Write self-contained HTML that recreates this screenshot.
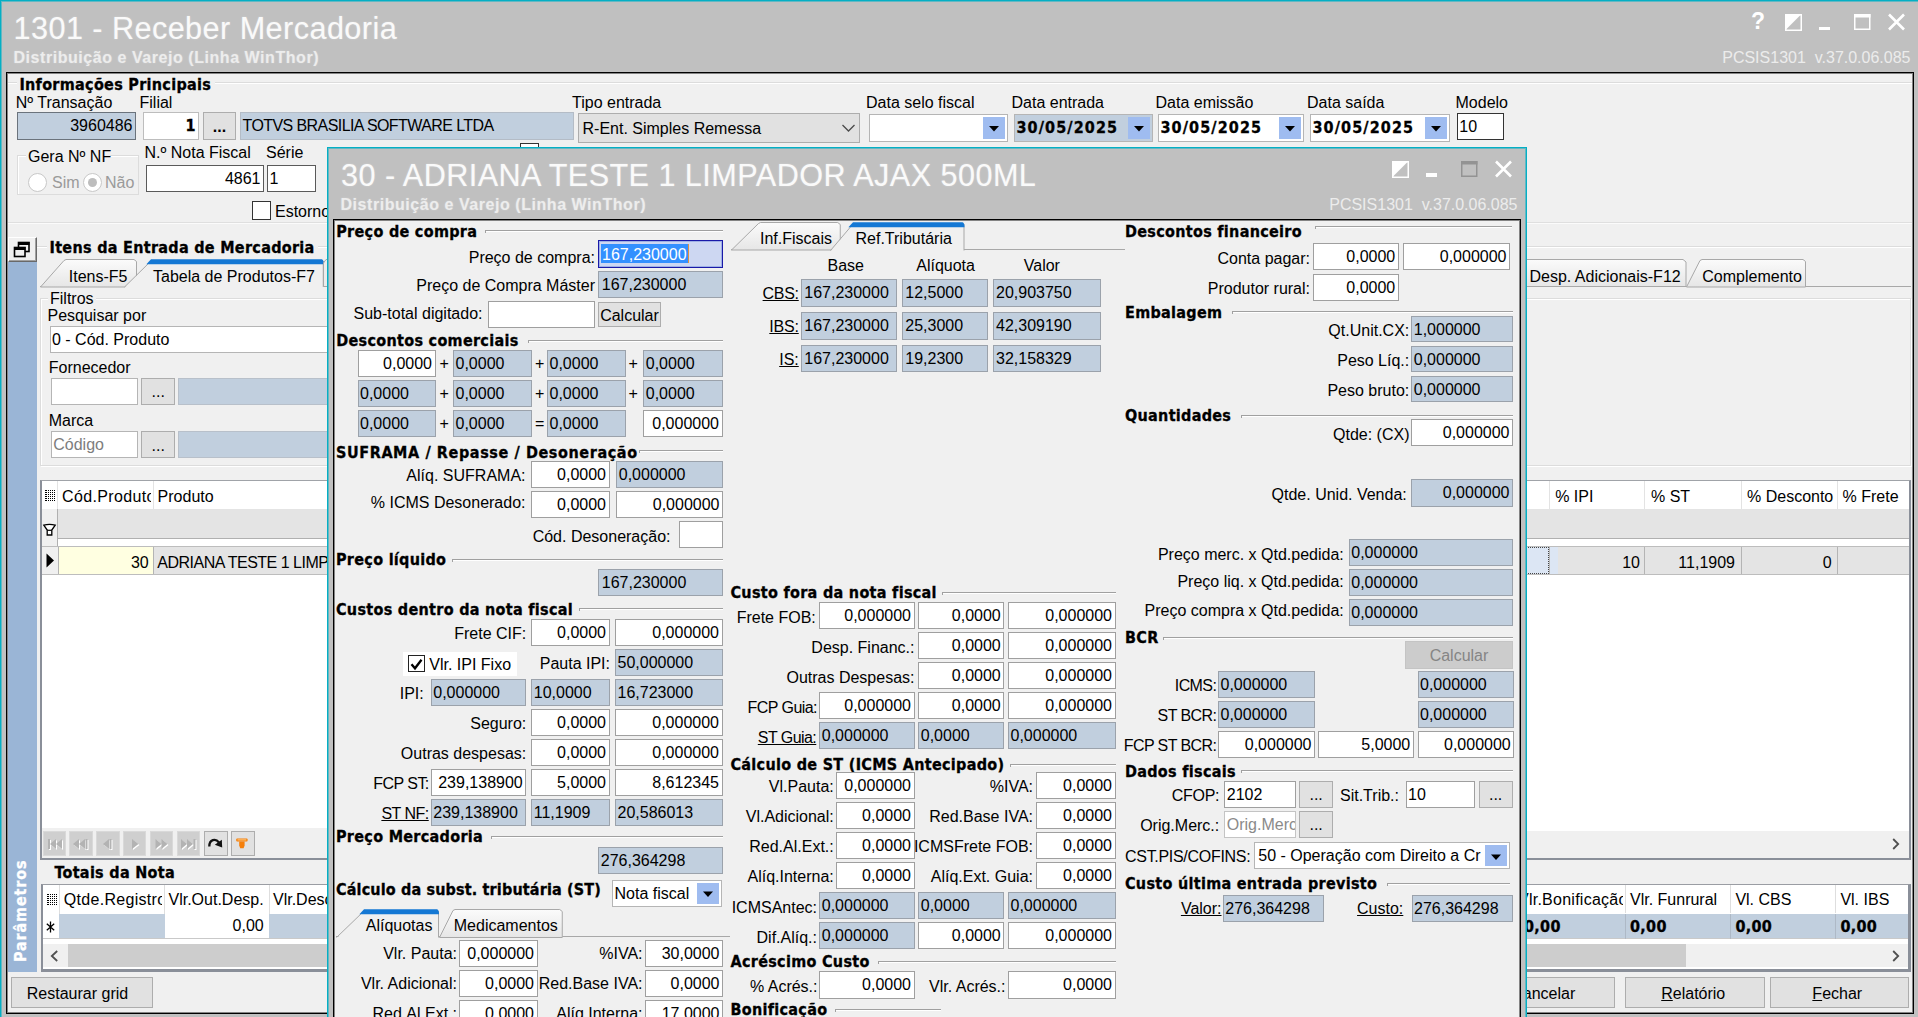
<!DOCTYPE html>
<html lang="pt-BR"><head><meta charset="utf-8"><title>1301 - Receber Mercadoria</title><style>
html,body{margin:0;padding:0}
body{width:1918px;height:1017px;position:relative;overflow:hidden;background:#c0c0c0;font:16px/20px "Liberation Sans", sans-serif;color:#000}
.a{position:absolute;box-sizing:content-box}
.t{white-space:pre;line-height:20px;font-size:16px}
.b{font-family:"DejaVu Sans Condensed", "Liberation Sans", sans-serif;font-weight:bold;letter-spacing:.3px;-webkit-text-stroke:.3px #000}
.vt{-webkit-text-stroke:.3px #fff}
.bx{box-sizing:border-box;white-space:pre;overflow:hidden;font-size:16px}
.bx.b{letter-spacing:0}
.ttl{font:30.6px/36px "Liberation Sans", sans-serif;letter-spacing:.45px;color:#fafafa;white-space:pre;text-shadow:0 0 2px rgba(255,255,255,.35)}
.sub{font:bold 16px/20px "Liberation Sans", sans-serif;letter-spacing:.55px;color:#ededed;white-space:pre;text-shadow:0 0 2px rgba(255,255,255,.3)}
.ver{font:16px/20px "Liberation Sans", sans-serif;color:#ececec;white-space:pre}
svg{overflow:visible}
.q{font:bold 23px/26px "Liberation Sans", sans-serif;color:#fff}
.vt{transform-origin:0 0;transform:rotate(-90deg);font-size:16px;color:#fff;white-space:nowrap;line-height:20px;letter-spacing:.85px}
</style></head><body>
<div class="a" style="left:0px;top:-0.25px;width:1918px;height:1px;background:#04afc4;"></div>
<div class="a" style="left:0px;top:0.75px;width:1918px;height:1px;background:#62b8c3;"></div>
<div class="a" style="left:0px;top:-0.25px;width:1px;height:1017px;background:#04afc4;"></div>
<div class="a" style="left:1px;top:0.75px;width:1px;height:1016px;background:#62b8c3;"></div>
<div class="a ttl" style="left:13.5px;top:10px">1301 - Receber Mercadoria</div>
<div class="a sub" style="left:13.5px;top:47.5px">Distribuição e Varejo (Linha WinThor)</div>
<div class="a ver" style="right:7.5px;top:48px">PCSIS1301  v.37.0.06.085</div>
<div class="a q" style="left:1751px;top:8.25px">?</div>
<svg class="a" style="left:1784.75px;top:13.75px" width="17" height="17"><rect x="0.75" y="0.75" width="15.5" height="15.5" fill="none" stroke="#fff" stroke-width="1.5"/><polygon points="0,0 16.5,0 0,16.5" fill="#fff"/></svg>
<div class="a" style="left:1819px;top:26.5px;width:10.5px;height:3.5px;background:#fff;"></div>
<svg class="a" style="left:1853.5px;top:14.25px" width="17" height="16"><rect x="0.75" y="0.75" width="15" height="14.5" fill="none" stroke="#fff" stroke-width="1.5"/><rect x="0" y="0" width="16.5" height="3.5" fill="#fff"/></svg>
<svg class="a" style="left:1888px;top:14.25px" width="17" height="16"><path d="M1,0.5 L16,15.5 M16,0.5 L1,15.5" stroke="#fff" stroke-width="2.6" fill="none"/></svg>
<div class="a" style="left:6px;top:71.75px;width:1908px;height:942px;background:#f0f0f0;border:1px solid #000;box-sizing:border-box;box-shadow:inset 0 0 0 1px rgba(0,0,0,.45);"></div>
<div class="a" style="left:8px;top:81.75px;width:1904px;height:1px;background:#dcdcdc;"></div>
<div class="a" style="left:8px;top:82.75px;width:1904px;height:1px;background:#fff;"></div>
<div class="a" style="left:17px;top:75.75px;width:198px;height:12px;background:#f0f0f0;"></div>
<div class="a t b" style="top:74.55px;left:19.4px;">Informações Principais</div>
<div class="a t" style="top:92.65px;left:15.75px;">Nº Transação</div>
<div class="a t" style="top:92.65px;left:139.5px;">Filial</div>
<div class="a t" style="top:92.65px;left:572px;">Tipo entrada</div>
<div class="a t" style="top:92.65px;left:866px;">Data selo fiscal</div>
<div class="a t" style="top:92.65px;left:1011.5px;">Data entrada</div>
<div class="a t" style="top:92.65px;left:1155.5px;">Data emissão</div>
<div class="a t" style="top:92.65px;left:1307px;">Data saída</div>
<div class="a t" style="top:92.65px;left:1455.5px;">Modelo</div>
<div class="a bx" style="left:16.5px;top:112.25px;width:119.5px;height:28px;background:#c1cfde;border:1px solid #6b737c;line-height:26.5px;text-align:right;padding:0 2.5px;">3960486</div>
<div class="a bx b" style="left:143px;top:112.25px;width:56px;height:28px;background:#fff;border:1px solid #bdbdbd;line-height:26.5px;text-align:right;padding:0 2.5px;">1</div>
<div class="a bx" style="left:203px;top:112.25px;width:33px;height:28px;background:#e1e1e1;border:1px solid #adadad;line-height:27.5px;text-align:center;font-weight:bold;">...</div>
<div class="a bx" style="left:240px;top:112.25px;width:334px;height:28px;background:#c1cfde;border:1px solid #b4bcc6;line-height:26.5px;text-align:left;padding:0 1.5px;letter-spacing:-0.58px;">TOTVS BRASILIA SOFTWARE LTDA</div>
<div class="a bx" style="left:578px;top:112.75px;width:282px;height:30.5px;background:#e1e1e1;border:1px solid #adadad;line-height:29.0px;text-align:left;padding:0 3.5px;">R-Ent. Simples Remessa</div>
<svg class="a" style="left:840px;top:123px" width="18" height="12"><path d="M2.5,2 L8.5,8 L14.5,2" stroke="#4a4a4a" stroke-width="1.3" fill="none"/></svg>
<div class="a bx" style="left:869px;top:113.75px;width:138.5px;height:28px;background:#fff;border:1px solid #b5b5b5;line-height:26.5px;text-align:left;padding:0 1.5px;"></div>
<div class="a" style="left:982.5px;top:116.75px;width:22px;height:22px;background:#9fbcf0;"></div>
<svg class="a" style="left:982.5px;top:117px" width="22" height="22"><polygon points="6.0,9.0 16.0,9.0 11.0,14.5" fill="#000"/></svg>
<div class="a bx b" style="left:1014px;top:113.75px;width:138.5px;height:28px;background:#c1cfde;border:1px solid #b5b5b5;line-height:26.5px;text-align:left;padding:0 1.5px;letter-spacing:1.1px;">30/05/2025</div>
<div class="a" style="left:1127.5px;top:116.75px;width:22px;height:22px;background:#9fbcf0;"></div>
<svg class="a" style="left:1127.5px;top:117px" width="22" height="22"><polygon points="6.0,9.0 16.0,9.0 11.0,14.5" fill="#000"/></svg>
<div class="a bx b" style="left:1158px;top:113.75px;width:146px;height:28px;background:#fff;border:1px solid #b5b5b5;line-height:26.5px;text-align:left;padding:0 1.5px;letter-spacing:1.1px;">30/05/2025</div>
<div class="a" style="left:1279px;top:116.75px;width:22px;height:22px;background:#9fbcf0;"></div>
<svg class="a" style="left:1279px;top:117px" width="22" height="22"><polygon points="6.0,9.0 16.0,9.0 11.0,14.5" fill="#000"/></svg>
<div class="a bx b" style="left:1310px;top:113.75px;width:140px;height:28px;background:#fff;border:1px solid #b5b5b5;line-height:26.5px;text-align:left;padding:0 1.5px;letter-spacing:1.1px;">30/05/2025</div>
<div class="a" style="left:1425px;top:116.75px;width:22px;height:22px;background:#9fbcf0;"></div>
<svg class="a" style="left:1425px;top:117px" width="22" height="22"><polygon points="6.0,9.0 16.0,9.0 11.0,14.5" fill="#000"/></svg>
<div class="a bx" style="left:1456.75px;top:112.75px;width:47.5px;height:27.5px;background:#fff;border:1px solid #333;line-height:26.0px;text-align:left;padding:0 1.5px;">10</div>
<div class="a" style="left:17px;top:154.75px;width:121.5px;height:40px;border:1px solid #dcdcdc;box-sizing:border-box;box-shadow:inset 1px 1px 0 #fff;"></div>
<div class="a" style="left:26px;top:149.75px;width:84px;height:12px;background:#f0f0f0;"></div>
<div class="a t" style="top:146.65px;left:28px;">Gera Nº NF</div>
<div class="a" style="left:28px;top:173px;width:19px;height:19px;border-radius:50%;border:1px solid #c8c8c8;background:#fff;box-sizing:border-box"></div>
<div class="a t" style="top:173.45px;left:52px;color:#9a9a9a;">Sim</div>
<div class="a" style="left:82.5px;top:173px;width:19px;height:19px;border-radius:50%;border:1px solid #c8c8c8;background:#fff;box-sizing:border-box"></div>
<div class="a" style="left:87.5px;top:178px;width:9px;height:9px;border-radius:50%;background:#bdbdbd"></div>
<div class="a t" style="top:173.45px;left:105px;color:#9a9a9a;">Não</div>
<div class="a t" style="top:143.15px;left:144.5px;">N.º Nota Fiscal</div>
<div class="a t" style="top:143.15px;left:266px;">Série</div>
<div class="a bx" style="left:146px;top:165.25px;width:118px;height:27px;background:#fff;border:1px solid #5a5a5a;line-height:25.5px;text-align:right;padding:0 2.5px;">4861</div>
<div class="a bx" style="left:267px;top:165.25px;width:49px;height:27px;background:#fff;border:1px solid #5a5a5a;line-height:25.5px;text-align:left;padding:0 1.5px;">1</div>
<div class="a" style="left:252px;top:201.25px;width:18.5px;height:18.5px;background:#fff;border:1px solid #333;box-sizing:border-box;"></div>
<div class="a t" style="top:202.15px;left:275px;">Estorno</div>
<div class="a" style="left:520px;top:142.75px;width:18.5px;height:18.5px;background:#fff;border:1px solid #333;box-sizing:border-box;"></div>
<div class="a" style="left:8px;top:221.75px;width:1904px;height:1px;background:#dfdfdf;"></div>
<div class="a" style="left:8px;top:222.75px;width:1904px;height:1px;background:#fbfbfb;"></div>
<div class="a" style="left:37px;top:245.75px;width:1874px;height:1px;background:#dcdcdc;"></div>
<div class="a" style="left:37px;top:246.75px;width:1874px;height:1px;background:#fff;"></div>
<div class="a" style="left:47px;top:239.75px;width:271px;height:14px;background:#f0f0f0;"></div>
<div class="a t b" style="top:238.45px;left:49.5px;">Itens da Entrada de Mercadoria</div>
<div class="a" style="left:8px;top:236.75px;width:29px;height:25.5px;background:#f0f0f0;border:1px solid #fff;box-sizing:border-box;border-right-color:#696969;border-bottom-color:#696969;box-shadow:inset -1px -1px 0 #a0a0a0;"></div>
<svg class="a" style="left:13px;top:241px" width="18" height="17"><rect x="5.5" y="1.5" width="10.5" height="9" fill="none" stroke="#000" stroke-width="1.6"/><rect x="5" y="1" width="11.5" height="3" fill="#000"/><rect x="1.5" y="6.5" width="10.5" height="9" fill="#f0f0f0" stroke="#000" stroke-width="1.6"/><rect x="1" y="6" width="11.5" height="3" fill="#000"/></svg>
<div class="a" style="left:8px;top:262.25px;width:29px;height:710px;background:#9ab5d6;"></div>
<div class="a b vt" style="left:11px;top:962px">Parâmetros</div>
<div class="a" style="left:40px;top:285.75px;width:1871px;height:1px;background:#a8a8a8;"></div>
<svg class="a" style="left:40px;top:258.5px" width="99" height="28.5"><defs><linearGradient id="g40" x1="0" y1="0" x2="0" y2="1"><stop offset="0" stop-color="#fbfbfb"/><stop offset="1" stop-color="#e6e6e6"/></linearGradient></defs><polygon points="0.5,28.0 24,1.5 26,0.5 94,0.5 96.5,2.5 96.5,28.0" fill="url(#g40)" stroke="#a8a8a8" stroke-width="1"/></svg>
<div class="a t" style="top:267.15px;left:68.75px;">Itens-F5</div>
<svg class="a" style="left:123.75px;top:259px" width="200.75" height="29"><polygon points="0.5,29 27,2 199.25,2 199.25,29" fill="#f0f0f0"/><path d="M0.5,28 L27,2 M199.25,2 L199.25,28" stroke="#a8a8a8" fill="none"/><path d="M22.4,5.2 L27,0.3 L197.75,0.3 Q199.75,0.6 199.75,5.2 Z" fill="#1478d4"/></svg>
<div class="a t" style="top:267.15px;left:153px;">Tabela de Produtos-F7</div>
<svg class="a" style="left:323px;top:258.5px" width="60" height="28"><polygon points="0.5,27.5 0.5,4 3,0.5 59,0.5 59,27.5" fill="#ececec" stroke="#a8a8a8"/></svg>
<svg class="a" style="left:1480px;top:258.5px" width="208" height="28"><defs><linearGradient id="gr1" x1="0" y1="0" x2="0" y2="1"><stop offset="0" stop-color="#fbfbfb"/><stop offset="1" stop-color="#e6e6e6"/></linearGradient></defs><polygon points="0.5,27.5 20,0.5 203,0.5 206,3 206,27.5" fill="url(#gr1)" stroke="#a8a8a8"/></svg>
<div class="a t" style="top:266.95px;left:1529.5px;">Desp. Adicionais-F12</div>
<svg class="a" style="left:1686px;top:258.5px" width="122" height="28.5"><defs><linearGradient id="g1686" x1="0" y1="0" x2="0" y2="1"><stop offset="0" stop-color="#fbfbfb"/><stop offset="1" stop-color="#e6e6e6"/></linearGradient></defs><polygon points="0.5,28.0 14,1.5 16,0.5 117,0.5 119.5,2.5 119.5,28.0" fill="url(#g1686)" stroke="#a8a8a8" stroke-width="1"/></svg>
<div class="a t" style="top:266.95px;left:1702.3px;">Complemento</div>
<div class="a" style="left:40px;top:297.75px;width:1871px;height:168px;border:1px solid #dcdcdc;box-sizing:border-box;box-shadow:inset 1px 1px 0 #fff, 1px 1px 0 #fff;"></div>
<div class="a" style="left:48px;top:291.75px;width:48px;height:13px;background:#f0f0f0;"></div>
<div class="a t" style="top:288.85px;left:50px;">Filtros</div>
<div class="a t" style="top:306.45px;left:47.5px;">Pesquisar por</div>
<div class="a bx" style="left:49.5px;top:325.75px;width:400px;height:27.5px;background:#fff;border:1px solid #b5b5b5;line-height:26.0px;text-align:left;padding:0 1.5px;">0 - Cód. Produto</div>
<div class="a t" style="top:357.65px;left:48.75px;">Fornecedor</div>
<div class="a bx" style="left:50.75px;top:378.25px;width:87px;height:27px;background:#fff;border:1px solid #b5b5b5;line-height:25.5px;text-align:left;padding:0 1.5px;"></div>
<div class="a bx" style="left:141.25px;top:378.25px;width:34px;height:27px;background:#e1e1e1;border:1px solid #adadad;line-height:26.5px;text-align:center;">...</div>
<div class="a bx" style="left:178.25px;top:378.25px;width:300px;height:27px;background:#c1cfde;border:1px solid #b8c0ca;line-height:25.5px;text-align:left;padding:0 1.5px;"></div>
<div class="a t" style="top:410.65px;left:48.75px;">Marca</div>
<div class="a bx" style="left:50.75px;top:430.75px;width:87px;height:27.5px;background:#fff;border:1px solid #b5b5b5;line-height:26.0px;text-align:left;padding:0 1.5px;color:#7d7d7d;">Código</div>
<div class="a bx" style="left:141.25px;top:430.75px;width:34px;height:27.5px;background:#e1e1e1;border:1px solid #adadad;line-height:27.0px;text-align:center;">...</div>
<div class="a bx" style="left:178.25px;top:430.75px;width:300px;height:27.5px;background:#c1cfde;border:1px solid #b8c0ca;line-height:26.0px;text-align:left;padding:0 1.5px;"></div>
<div class="a" style="left:40px;top:479.75px;width:1871px;height:380px;background:#fff;border:2px solid #8a8f99;box-sizing:border-box;border-top:1px solid #a0a3a8;"></div>
<div class="a" style="left:57px;top:480.75px;width:1px;height:28px;background:#e3e3e3;"></div>
<div class="a" style="left:153px;top:480.75px;width:1px;height:28px;background:#e3e3e3;"></div>
<svg class="a" style="left:44px;top:489px" width="12" height="13"><g stroke="#000" stroke-width="1"><path d="M1,1.5h2M1,3.5h2M1,5.5h2M1,7.5h2M1,9.5h2M1,11.5h2" stroke-width="1.2"/><path d="M4,1.5h7M4,3.5h7M4,5.5h7M4,7.5h7M4,9.5h7M4,11.5h7" stroke-dasharray="1,1"/></g></svg>
<div class="a t" style="left:62px;top:486.54999999999995px;width:89px;overflow:hidden;letter-spacing:.35px">Cód.Produto</div>
<div class="a t" style="top:486.55px;left:157.6px;">Produto</div>
<div class="a" style="left:1549px;top:480.75px;width:1px;height:28px;background:#e3e3e3;"></div>
<div class="a" style="left:1644px;top:480.75px;width:1px;height:28px;background:#e3e3e3;"></div>
<div class="a" style="left:1740.5px;top:480.75px;width:1px;height:28px;background:#e3e3e3;"></div>
<div class="a" style="left:1836.5px;top:480.75px;width:1px;height:28px;background:#e3e3e3;"></div>
<div class="a t" style="top:486.55px;left:1555.2px;">% IPI</div>
<div class="a t" style="top:486.55px;left:1651px;">% ST</div>
<div class="a t" style="top:486.55px;left:1747px;">% Desconto</div>
<div class="a t" style="top:486.55px;left:1842.6px;">% Frete</div>
<div class="a" style="left:42px;top:509.25px;width:1867px;height:29px;background:#e4e4e4;"></div>
<div class="a" style="left:42px;top:509.25px;width:16px;height:37px;background:#f0f0f0;"></div>
<div class="a" style="left:57px;top:509.25px;width:1px;height:37px;background:#b0b0b0;"></div>
<div class="a" style="left:58px;top:537.75px;width:1851px;height:1px;background:#b0b0b0;"></div>
<svg class="a" style="left:43px;top:524px" width="13" height="12"><path d="M0.8,1.2 Q6.5,-0.3 12.2,1.2 L8.8,6 V11 H4.2 V6 Z" fill="#fff" stroke="#000" stroke-width="1.3"/><path d="M4.2,6.3H8.8" stroke="#000" stroke-width="1.2"/></svg>
<div class="a" style="left:42px;top:546.25px;width:1867px;height:28.5px;background:#e4e4e4;"></div>
<div class="a" style="left:42px;top:546.25px;width:16px;height:28.5px;background:#f0f0f0;"></div>
<div class="a" style="left:42px;top:545.75px;width:1867px;height:1px;background:#bdbdbd;"></div>
<div class="a" style="left:42px;top:574.25px;width:1867px;height:1px;background:#bdbdbd;"></div>
<svg class="a" style="left:46px;top:553px" width="9" height="15"><polygon points="0.5,0.5 8,7.5 0.5,14.5" fill="#000"/></svg>
<div class="a" style="left:58px;top:546.75px;width:95px;height:27.5px;background:#ffffe1;"></div>
<div class="a" style="left:57.5px;top:546.75px;width:1px;height:27.5px;background:#b4b4b4;"></div>
<div class="a" style="left:153px;top:546.75px;width:1px;height:27.5px;background:#b4b4b4;"></div>
<div class="a" style="left:1549px;top:546.75px;width:1px;height:27.5px;background:#b4b4b4;"></div>
<div class="a" style="left:1644px;top:546.75px;width:1px;height:27.5px;background:#b4b4b4;"></div>
<div class="a" style="left:1740.5px;top:546.75px;width:1px;height:27.5px;background:#b4b4b4;"></div>
<div class="a" style="left:1836.5px;top:546.75px;width:1px;height:27.5px;background:#b4b4b4;"></div>
<div class="a t" style="top:552.55px;right:1769.3px;">30</div>
<div class="a t" style="top:552.55px;left:157.3px;letter-spacing:-0.5px;">ADRIANA TESTE 1 LIMPADOR AJAX 500ML</div>
<div class="a" style="left:1500px;top:546.75px;width:49px;height:27.5px;background:#dce6f4;border:1px dotted #444;box-sizing:border-box;"></div>
<div class="a" style="left:1549.5px;top:546.75px;width:8px;height:27.5px;background:#dce6f4;"></div>
<div class="a t" style="top:552.55px;right:278px;">10</div>
<div class="a t" style="top:552.55px;right:183px;">11,1909</div>
<div class="a t" style="top:552.55px;right:86.3px;">0</div>
<div class="a" style="left:42px;top:827.75px;width:1867px;height:30px;background:#f0f0f0;"></div>
<div class="a" style="left:1527px;top:827.75px;width:382px;height:3px;background:#fff;"></div>
<div class="a" style="left:42.5px;top:831.25px;width:23.25px;height:24.25px;background:#cfcfcf;border:1px solid #d9d9d9;box-sizing:border-box"></div>
<svg class="a" style="left:42.5px;top:831.25px" width="24" height="25"><g fill="#fff" transform="translate(1,1)"><rect x="5" y="8" width="2" height="10"/><polygon points="13,8 7,13 13,18"/><polygon points="19,8 13,13 19,18"/></g><g fill="#b3b3b3"><rect x="5" y="8" width="2" height="10"/><polygon points="13,8 7,13 13,18"/><polygon points="19,8 13,13 19,18"/></g></svg>
<div class="a" style="left:69.25px;top:831.25px;width:23.25px;height:24.25px;background:#cfcfcf;border:1px solid #d9d9d9;box-sizing:border-box"></div>
<svg class="a" style="left:69.25px;top:831.25px" width="24" height="25"><g fill="#fff" transform="translate(1,1)"><polygon points="10,8 4,13 10,18"/><polygon points="16,8 10,13 16,18"/><rect x="16.5" y="8" width="2" height="10"/></g><g fill="#b3b3b3"><polygon points="10,8 4,13 10,18"/><polygon points="16,8 10,13 16,18"/><rect x="16.5" y="8" width="2" height="10"/></g></svg>
<div class="a" style="left:96.25px;top:831.25px;width:23.25px;height:24.25px;background:#cfcfcf;border:1px solid #d9d9d9;box-sizing:border-box"></div>
<svg class="a" style="left:96.25px;top:831.25px" width="24" height="25"><g fill="#fff" transform="translate(1,1)"><polygon points="13,8 7,13 13,18"/><rect x="13.5" y="8" width="2" height="10"/></g><g fill="#b3b3b3"><polygon points="13,8 7,13 13,18"/><rect x="13.5" y="8" width="2" height="10"/></g></svg>
<div class="a" style="left:123px;top:831.25px;width:23.25px;height:24.25px;background:#cfcfcf;border:1px solid #d9d9d9;box-sizing:border-box"></div>
<svg class="a" style="left:123px;top:831.25px" width="24" height="25"><g fill="#fff" transform="translate(1,1)"><polygon points="9,8 15.5,13 9,18"/></g><g fill="#b3b3b3"><polygon points="9,8 15.5,13 9,18"/></g></svg>
<div class="a" style="left:150px;top:831.25px;width:23.25px;height:24.25px;background:#cfcfcf;border:1px solid #d9d9d9;box-sizing:border-box"></div>
<svg class="a" style="left:150px;top:831.25px" width="24" height="25"><g fill="#fff" transform="translate(1,1)"><polygon points="5.5,8 11.5,13 5.5,18"/><polygon points="11.5,8 17.5,13 11.5,18"/></g><g fill="#b3b3b3"><polygon points="5.5,8 11.5,13 5.5,18"/><polygon points="11.5,8 17.5,13 11.5,18"/></g></svg>
<div class="a" style="left:176.75px;top:831.25px;width:23.25px;height:24.25px;background:#cfcfcf;border:1px solid #d9d9d9;box-sizing:border-box"></div>
<svg class="a" style="left:176.75px;top:831.25px" width="24" height="25"><g fill="#fff" transform="translate(1,1)"><polygon points="4,8 10,13 4,18"/><polygon points="10,8 16,13 10,18"/><rect x="16.5" y="8" width="2" height="10"/></g><g fill="#b3b3b3"><polygon points="4,8 10,13 4,18"/><polygon points="10,8 16,13 10,18"/><rect x="16.5" y="8" width="2" height="10"/></g></svg>
<div class="a" style="left:204.25px;top:831.25px;width:23.25px;height:24.25px;background:#e1e1e1;border:1px solid #adadad;box-sizing:border-box"></div>
<svg class="a" style="left:204.25px;top:831.25px" width="24" height="25"><path d="M5.3,15.5 C5.3,8.5 11.5,7 15,11.5" stroke="#111" stroke-width="2.3" fill="none"/><polygon points="10.8,13.8 18.2,16.6 17.8,8.8" fill="#111"/></svg>
<div class="a" style="left:231.25px;top:831.25px;width:23.25px;height:24.25px;background:#e1e1e1;border:1px solid #adadad;box-sizing:border-box"></div>
<svg class="a" style="left:231.25px;top:831.25px" width="24" height="25"><rect x="5.2" y="7.4" width="11.4" height="3.2" rx="1" fill="#f57f0a"/><rect x="6.5" y="8.4" width="8.8" height="1" fill="#ffd08a"/><path d="M8.2,10.4 H13.6 V14.6 L12.6,17.3 H9.2 L8.2,14.6 Z" fill="#f57f0a"/></svg>
<svg class="a" style="left:1892px;top:837.5px" width="8" height="12"><path d="M1.2,1 L6.2,6 L1.2,11" stroke="#505050" stroke-width="1.8" fill="none"/></svg>
<div class="a t b" style="top:863.45px;left:54.5px;">Totais da Nota</div>
<div class="a" style="left:41px;top:883.5px;width:1870px;height:88px;background:#fff;border:1px solid #9a9da3;box-sizing:border-box;border-bottom:3px solid #8a8f99;border-right:3px solid #8a8f99;border-left:2px solid #8a8f99;"></div>
<svg class="a" style="left:46px;top:893px" width="12" height="13"><g stroke="#000" stroke-width="1"><path d="M1,1.5h2M1,3.5h2M1,5.5h2M1,7.5h2M1,9.5h2M1,11.5h2" stroke-width="1.2"/><path d="M4,1.5h7M4,3.5h7M4,5.5h7M4,7.5h7M4,9.5h7M4,11.5h7" stroke-dasharray="1,1"/></g></svg>
<div class="a" style="left:59.25px;top:885.25px;width:1px;height:53px;background:#dedede;"></div>
<div class="a" style="left:164.25px;top:885.25px;width:1px;height:53px;background:#dedede;"></div>
<div class="a" style="left:268.75px;top:885.25px;width:1px;height:53px;background:#dedede;"></div>
<div class="a t" style="left:63.75px;top:890.15px;width:98px;overflow:hidden;letter-spacing:.3px">Qtde.Registro</div>
<div class="a t" style="top:890.15px;left:168.5px;">Vlr.Out.Desp.</div>
<div class="a t" style="top:890.15px;left:273px;">Vlr.Desc.</div>
<div class="a" style="left:43px;top:913.5px;width:1865px;height:25px;background:#c1cfde;"></div>
<div class="a" style="left:43px;top:913.5px;width:16.25px;height:25px;background:#fff;"></div>
<div class="a" style="left:165px;top:913.5px;width:104px;height:25px;background:#fff;"></div>
<svg class="a" style="left:45.5px;top:921px" width="9" height="12"><path d="M4.5,0.5V11.5M0.8,2.8L8.2,9.2M8.2,2.8L0.8,9.2" stroke="#000" stroke-width="1.3"/></svg>
<div class="a t" style="top:916.45px;right:1654.25px;">0,00</div>
<div class="a" style="left:43px;top:938.25px;width:1865px;height:1px;background:#c9c9c9;"></div>
<div class="a" style="left:1625px;top:885.25px;width:1px;height:28px;background:#dedede;"></div>
<div class="a" style="left:1625px;top:913.5px;width:1px;height:25px;background:#aeb9c6;"></div>
<div class="a" style="left:1730.3px;top:885.25px;width:1px;height:28px;background:#dedede;"></div>
<div class="a" style="left:1730.3px;top:913.5px;width:1px;height:25px;background:#aeb9c6;"></div>
<div class="a" style="left:1835px;top:885.25px;width:1px;height:28px;background:#dedede;"></div>
<div class="a" style="left:1835px;top:913.5px;width:1px;height:25px;background:#aeb9c6;"></div>
<div class="a t" style="left:1500px;top:890.15px;width:123px;overflow:hidden;text-indent:18px;letter-spacing:.25px">Vlr.Bonificação</div>
<div class="a t" style="top:890.15px;left:1630px;">Vlr. Funrural</div>
<div class="a t" style="top:890.15px;left:1735.4px;">Vl. CBS</div>
<div class="a t" style="top:890.15px;left:1840.4px;">Vl. IBS</div>
<div class="a t b" style="top:917.15px;left:1524px;">0,00</div>
<div class="a t b" style="top:917.15px;left:1630px;">0,00</div>
<div class="a t b" style="top:917.15px;left:1735.4px;">0,00</div>
<div class="a t b" style="top:917.15px;left:1840.4px;">0,00</div>
<div class="a" style="left:43px;top:943.5px;width:1865px;height:23.5px;background:#f0f0f0;"></div>
<div class="a" style="left:67.5px;top:943.5px;width:1618.5px;height:23.5px;background:#cdcdcd;"></div>
<svg class="a" style="left:50px;top:949.5px" width="9" height="12"><path d="M7.2,1 L1.8,6 L7.2,11" stroke="#505050" stroke-width="1.8" fill="none"/></svg>
<svg class="a" style="left:1892px;top:949.5px" width="8" height="12"><path d="M1.2,1 L6.2,6 L1.2,11" stroke="#505050" stroke-width="1.8" fill="none"/></svg>
<div class="a bx" style="left:11.25px;top:976.75px;width:141.5px;height:31.5px;background:#e1e1e1;border:1px solid #adadad;line-height:31.0px;text-align:center;padding-right:9px;">Restaurar grid</div>
<div class="a bx" style="left:1472px;top:976.75px;width:142.5px;height:31.5px;background:#e1e1e1;border:1px solid #adadad;line-height:31.0px;text-align:center;"><u>C</u>ancelar</div>
<div class="a bx" style="left:1625px;top:976.75px;width:139.5px;height:31.5px;background:#e1e1e1;border:1px solid #adadad;line-height:31.0px;text-align:center;padding-right:3px;"><u>R</u>elatório</div>
<div class="a bx" style="left:1769.5px;top:976.75px;width:139.5px;height:31.5px;background:#e1e1e1;border:1px solid #adadad;line-height:31.0px;text-align:center;padding-right:4px;"><u>F</u>echar</div>
<div class="a" style="left:327px;top:146.75px;width:1200px;height:880px;background:#c0c0c0;border:1px solid #04afc4;box-sizing:border-box;box-shadow:inset 0 0 0 1px #62b8c3;"></div>
<div class="a ttl" style="left:341px;top:157px">30 - ADRIANA TESTE 1 LIMPADOR AJAX 500ML</div>
<div class="a sub" style="left:340.5px;top:195px">Distribuição e Varejo (Linha WinThor)</div>
<div class="a ver" style="right:400.5px;top:195.3px">PCSIS1301  v.37.0.06.085</div>
<svg class="a" style="left:1391.75px;top:160.5px" width="17" height="17"><rect x="0.75" y="0.75" width="15.5" height="15.5" fill="none" stroke="#fff" stroke-width="1.5"/><polygon points="0,0 16.5,0 0,16.5" fill="#fff"/></svg>
<div class="a" style="left:1426.25px;top:173.25px;width:10.5px;height:3.5px;background:#fff;"></div>
<svg class="a" style="left:1460.75px;top:161.0px" width="17" height="16"><rect x="0.75" y="0.75" width="15" height="14.5" fill="none" stroke="#939393" stroke-width="1.5"/><rect x="0" y="0" width="16.5" height="3.5" fill="#939393"/></svg>
<svg class="a" style="left:1495px;top:161.0px" width="17" height="16"><path d="M1,0.5 L16,15.5 M16,0.5 L1,15.5" stroke="#fff" stroke-width="2.6" fill="none"/></svg>
<div class="a" style="left:333px;top:218.75px;width:1188px;height:810px;background:#f0f0f0;border:1px solid #000;box-sizing:border-box;box-shadow:inset 0 0 0 1px rgba(0,0,0,.45);"></div>
<div class="a t b" style="top:221.9px;left:336.25px;">Preço de compra</div>
<div class="a" style="left:484.5px;top:229.75px;width:238.0px;height:1px;background:#a0a0a0;"></div>
<div class="a" style="left:484.5px;top:230.75px;width:238.0px;height:1px;background:#ffffff;"></div>
<div class="a" style="left:484.5px;top:229.75px;width:1px;height:3px;background:#a0a0a0;"></div>
<div class="a t" style="top:247.65px;right:1323px;">Preço de compra:</div>
<div class="a" style="left:598.25px;top:239.75px;width:124.5px;height:28.25px;background:#cdd7f2;border:1px solid #1a1aa8;box-sizing:border-box;box-shadow:inset 0 0 0 1px #9fb0e6;"></div>
<div class="a" style="left:601px;top:243.5px;width:87px;height:19px;background:#3390ff;"></div>
<div class="a t" style="top:245.05px;left:602px;color:#fff;">167,230000</div>
<div class="a" style="left:688px;top:243.75px;width:1.3px;height:19px;background:#e09040;"></div>
<div class="a t" style="top:275.9px;right:1323px;">Preço de Compra Máster</div>
<div class="a bx" style="left:598.25px;top:271.0px;width:124.25px;height:26.5px;background:#c1cfde;border:1px solid #9ba2ab;line-height:25.0px;text-align:left;padding:0 2.5px;">167,230000</div>
<div class="a t" style="top:304.4px;right:1435.5px;">Sub-total digitado:</div>
<div class="a bx" style="left:487.5px;top:300.5px;width:107.5px;height:27px;background:#fff;border:1px solid #9f9f9f;line-height:25.5px;text-align:left;padding:0 1.5px;"></div>
<div class="a bx" style="left:598.25px;top:301.75px;width:62.5px;height:25.5px;background:#e1e1e1;border:1px solid #adadad;line-height:25.0px;text-align:center;">Calcular</div>
<div class="a t b" style="top:331.15px;left:336.25px;">Descontos comerciais</div>
<div class="a" style="left:528px;top:339.75px;width:194.5px;height:1px;background:#a0a0a0;"></div>
<div class="a" style="left:528px;top:340.75px;width:194.5px;height:1px;background:#ffffff;"></div>
<div class="a" style="left:528px;top:339.75px;width:1px;height:3px;background:#a0a0a0;"></div>
<div class="a bx" style="left:357.5px;top:349.75px;width:78px;height:27px;background:#fff;border:1px solid #9f9f9f;line-height:25.5px;text-align:right;padding:0 2.5px;">0,0000</div>
<div class="a bx" style="left:453px;top:349.75px;width:78.75px;height:27px;background:#c1cfde;border:1px solid #9ba2ab;line-height:25.5px;text-align:left;padding:0 1.5px;">0,0000</div>
<div class="a bx" style="left:547px;top:349.75px;width:79.25px;height:27px;background:#c1cfde;border:1px solid #9ba2ab;line-height:25.5px;text-align:left;padding:0 1.5px;">0,0000</div>
<div class="a bx" style="left:643.25px;top:349.75px;width:79.25px;height:27px;background:#c1cfde;border:1px solid #9ba2ab;line-height:25.5px;text-align:left;padding:0 1.5px;">0,0000</div>
<div class="a t" style="top:354.45px;left:439.5px;">+</div>
<div class="a t" style="top:354.45px;left:535px;">+</div>
<div class="a t" style="top:354.45px;left:628.5px;">+</div>
<div class="a bx" style="left:357.5px;top:379.75px;width:78px;height:27px;background:#c1cfde;border:1px solid #9ba2ab;line-height:25.5px;text-align:left;padding:0 1.5px;">0,0000</div>
<div class="a bx" style="left:453px;top:379.75px;width:78.75px;height:27px;background:#c1cfde;border:1px solid #9ba2ab;line-height:25.5px;text-align:left;padding:0 1.5px;">0,0000</div>
<div class="a bx" style="left:547px;top:379.75px;width:79.25px;height:27px;background:#c1cfde;border:1px solid #9ba2ab;line-height:25.5px;text-align:left;padding:0 1.5px;">0,0000</div>
<div class="a bx" style="left:643.25px;top:379.75px;width:79.25px;height:27px;background:#c1cfde;border:1px solid #9ba2ab;line-height:25.5px;text-align:left;padding:0 1.5px;">0,0000</div>
<div class="a t" style="top:384.45px;left:439.5px;">+</div>
<div class="a t" style="top:384.45px;left:535px;">+</div>
<div class="a t" style="top:384.45px;left:628.5px;">+</div>
<div class="a bx" style="left:357.5px;top:409.75px;width:78px;height:27px;background:#c1cfde;border:1px solid #9ba2ab;line-height:25.5px;text-align:left;padding:0 1.5px;">0,0000</div>
<div class="a bx" style="left:453px;top:409.75px;width:78.75px;height:27px;background:#c1cfde;border:1px solid #9ba2ab;line-height:25.5px;text-align:left;padding:0 1.5px;">0,0000</div>
<div class="a bx" style="left:547px;top:409.75px;width:79.25px;height:27px;background:#c1cfde;border:1px solid #9ba2ab;line-height:25.5px;text-align:left;padding:0 1.5px;">0,0000</div>
<div class="a bx" style="left:643.25px;top:409.75px;width:79.25px;height:27px;background:#fff;border:1px solid #9f9f9f;line-height:25.5px;text-align:right;padding:0 2.5px;">0,000000</div>
<div class="a t" style="top:414.45px;left:439.5px;">+</div>
<div class="a t" style="top:414.45px;left:535px;">=</div>
<div class="a t b" style="top:442.65px;left:336px;letter-spacing:0.6px;">SUFRAMA / Repasse / Desoneração</div>
<div class="a t b" style="top:442.65px;left:336px;"></div>
<div class="a" style="left:638.5px;top:449.75px;width:84.0px;height:1px;background:#a0a0a0;"></div>
<div class="a" style="left:638.5px;top:450.75px;width:84.0px;height:1px;background:#ffffff;"></div>
<div class="a" style="left:638.5px;top:449.75px;width:1px;height:3px;background:#a0a0a0;"></div>
<div class="a t" style="top:465.9px;right:1392.5px;">Alíq. SUFRAMA:</div>
<div class="a bx" style="left:531.25px;top:461.0px;width:78.25px;height:27px;background:#fff;border:1px solid #9f9f9f;line-height:25.5px;text-align:right;padding:0 2.5px;">0,0000</div>
<div class="a bx" style="left:616.25px;top:461.0px;width:106.75px;height:27px;background:#c1cfde;border:1px solid #9ba2ab;line-height:25.5px;text-align:left;padding:0 1.5px;">0,000000</div>
<div class="a t" style="top:493.4px;right:1392.5px;">% ICMS Desonerado:</div>
<div class="a bx" style="left:531.25px;top:491.0px;width:78.25px;height:27px;background:#fff;border:1px solid #9f9f9f;line-height:25.5px;text-align:right;padding:0 2.5px;">0,0000</div>
<div class="a bx" style="left:616.25px;top:491.0px;width:106.75px;height:27px;background:#fff;border:1px solid #9f9f9f;line-height:25.5px;text-align:right;padding:0 2.5px;">0,000000</div>
<div class="a t" style="top:526.9px;right:1247.5px;">Cód. Desoneração:</div>
<div class="a bx" style="left:679.25px;top:521.0px;width:43.75px;height:27px;background:#fff;border:1px solid #9f9f9f;line-height:25.5px;text-align:left;padding:0 1.5px;"></div>
<div class="a t b" style="top:550.15px;left:336px;">Preço líquido</div>
<div class="a" style="left:451.75px;top:558.75px;width:270.75px;height:1px;background:#a0a0a0;"></div>
<div class="a" style="left:451.75px;top:559.75px;width:270.75px;height:1px;background:#ffffff;"></div>
<div class="a" style="left:451.75px;top:558.75px;width:1px;height:3px;background:#a0a0a0;"></div>
<div class="a bx" style="left:598.25px;top:569.0px;width:124.25px;height:27px;background:#c1cfde;border:1px solid #9ba2ab;line-height:25.5px;text-align:left;padding:0 2.5px;">167,230000</div>
<div class="a t b" style="top:599.55px;left:336px;">Custos dentro da nota fiscal</div>
<div class="a" style="left:579.25px;top:607.75px;width:143.25px;height:1px;background:#a0a0a0;"></div>
<div class="a" style="left:579.25px;top:608.75px;width:143.25px;height:1px;background:#ffffff;"></div>
<div class="a" style="left:579.25px;top:607.75px;width:1px;height:3px;background:#a0a0a0;"></div>
<div class="a t" style="top:623.9px;right:1391.75px;">Frete CIF:</div>
<div class="a bx" style="left:531.25px;top:618.5px;width:78.25px;height:27px;background:#fff;border:1px solid #9f9f9f;line-height:25.5px;text-align:right;padding:0 2.5px;">0,0000</div>
<div class="a bx" style="left:615px;top:618.5px;width:107.5px;height:27px;background:#fff;border:1px solid #9f9f9f;line-height:25.5px;text-align:right;padding:0 2.5px;">0,000000</div>
<div class="a" style="left:403.25px;top:651.5px;width:113.75px;height:24px;background:#fff;"></div>
<div class="a" style="left:408px;top:655.25px;width:16.5px;height:17px;background:#fff;border:1px solid #222;box-sizing:border-box;"></div>
<svg class="a" style="left:408px;top:655.5px" width="17" height="17"><path d="M3.5,8.2 L7,12.3 L13.5,3.8" stroke="#000" stroke-width="2.3" fill="none"/></svg>
<div class="a t" style="top:655.15px;left:429.25px;">Vlr. IPI Fixo</div>
<div class="a t" style="top:653.9px;right:1308px;">Pauta IPI:</div>
<div class="a bx" style="left:615px;top:649.0px;width:107.5px;height:26.5px;background:#c1cfde;border:1px solid #9ba2ab;line-height:25.0px;text-align:left;padding:0 1.5px;">50,000000</div>
<div class="a t" style="top:683.9px;right:1494.25px;">IPI:</div>
<div class="a bx" style="left:430.75px;top:678.5px;width:95.5px;height:27px;background:#c1cfde;border:1px solid #9ba2ab;line-height:25.5px;text-align:left;padding:0 1.5px;">0,000000</div>
<div class="a bx" style="left:531.25px;top:678.5px;width:78.25px;height:27px;background:#c1cfde;border:1px solid #9ba2ab;line-height:25.5px;text-align:left;padding:0 1.5px;">10,0000</div>
<div class="a bx" style="left:615px;top:678.5px;width:107.5px;height:27px;background:#c1cfde;border:1px solid #9ba2ab;line-height:25.5px;text-align:left;padding:0 1.5px;">16,723000</div>
<div class="a t" style="top:713.9px;right:1391.75px;">Seguro:</div>
<div class="a bx" style="left:531.25px;top:708.5px;width:78.25px;height:27px;background:#fff;border:1px solid #9f9f9f;line-height:25.5px;text-align:right;padding:0 2.5px;">0,0000</div>
<div class="a bx" style="left:615px;top:708.5px;width:107.5px;height:27px;background:#fff;border:1px solid #9f9f9f;line-height:25.5px;text-align:right;padding:0 2.5px;">0,000000</div>
<div class="a t" style="top:743.9px;right:1391.75px;">Outras despesas:</div>
<div class="a bx" style="left:531.25px;top:738.5px;width:78.25px;height:27px;background:#fff;border:1px solid #9f9f9f;line-height:25.5px;text-align:right;padding:0 2.5px;">0,0000</div>
<div class="a bx" style="left:615px;top:738.5px;width:107.5px;height:27px;background:#fff;border:1px solid #9f9f9f;line-height:25.5px;text-align:right;padding:0 2.5px;">0,000000</div>
<div class="a t" style="top:773.9px;right:1489.25px;letter-spacing:-0.55px;">FCP ST:</div>
<div class="a bx" style="left:430.75px;top:768.5px;width:95.5px;height:27px;background:#fff;border:1px solid #9f9f9f;line-height:25.5px;text-align:right;padding:0 2.5px;">239,138900</div>
<div class="a bx" style="left:531.25px;top:768.5px;width:78.25px;height:27px;background:#fff;border:1px solid #9f9f9f;line-height:25.5px;text-align:right;padding:0 2.5px;">5,0000</div>
<div class="a bx" style="left:615px;top:768.5px;width:107.5px;height:27px;background:#fff;border:1px solid #9f9f9f;line-height:25.5px;text-align:right;padding:0 2.5px;">8,612345</div>
<div class="a t" style="top:803.9px;right:1489.25px;text-decoration:underline;letter-spacing:-0.5px;">ST NF:</div>
<div class="a bx" style="left:430.75px;top:798.5px;width:95.5px;height:27px;background:#c1cfde;border:1px solid #9ba2ab;line-height:25.5px;text-align:left;padding:0 1.5px;">239,138900</div>
<div class="a bx" style="left:531.25px;top:798.5px;width:78.25px;height:27px;background:#c1cfde;border:1px solid #9ba2ab;line-height:25.5px;text-align:left;padding:0 1.5px;">11,1909</div>
<div class="a bx" style="left:615px;top:798.5px;width:107.5px;height:27px;background:#c1cfde;border:1px solid #9ba2ab;line-height:25.5px;text-align:left;padding:0 1.5px;">20,586013</div>
<div class="a t b" style="top:827.45px;left:336px;">Preço Mercadoria</div>
<div class="a" style="left:490.75px;top:835.75px;width:231.75px;height:1px;background:#a0a0a0;"></div>
<div class="a" style="left:490.75px;top:836.75px;width:231.75px;height:1px;background:#ffffff;"></div>
<div class="a" style="left:490.75px;top:835.75px;width:1px;height:3px;background:#a0a0a0;"></div>
<div class="a bx" style="left:598.25px;top:846.5px;width:124.25px;height:27.5px;background:#c1cfde;border:1px solid #9ba2ab;line-height:26.0px;text-align:left;padding:0 1.5px;">276,364298</div>
<div class="a t b" style="top:880.15px;left:336px;letter-spacing:0.15px;">Cálculo da subst. tributária (ST)</div>
<div class="a bx" style="left:612px;top:879.75px;width:110px;height:27px;background:#fff;border:1px solid #b5b5b5;line-height:25.5px;text-align:left;padding:0 1.5px;">Nota fiscal</div>
<div class="a" style="left:697px;top:882.75px;width:22px;height:21px;background:#9fbcf0;"></div>
<svg class="a" style="left:697px;top:883px" width="22" height="21"><polygon points="6.0,8.5 16.0,8.5 11.0,14.0" fill="#000"/></svg>
<div class="a" style="left:336px;top:936.25px;width:394px;height:1px;background:#a8a8a8;"></div>
<svg class="a" style="left:336px;top:909px" width="104" height="29.5"><polygon points="0.5,29.5 28,2 102.5,2 102.5,29.5" fill="#f0f0f0"/><path d="M0.5,28.5 L28,2 M102.5,2 L102.5,28.5" stroke="#a8a8a8" fill="none"/><path d="M23.4,5.2 L28,0.3 L101,0.3 Q103,0.6 103,5.2 Z" fill="#1478d4"/></svg>
<div class="a t" style="top:915.9px;left:365.75px;">Alíquotas</div>
<svg class="a" style="left:438.75px;top:908.5px" width="125.75" height="29.0"><defs><linearGradient id="g438" x1="0" y1="0" x2="0" y2="1"><stop offset="0" stop-color="#fbfbfb"/><stop offset="1" stop-color="#e6e6e6"/></linearGradient></defs><polygon points="0.5,28.5 14,1.5 16,0.5 120.75,0.5 123.25,2.5 123.25,28.5" fill="url(#g438)" stroke="#a8a8a8" stroke-width="1"/></svg>
<div class="a t" style="top:915.9px;left:453.75px;">Medicamentos</div>
<div class="a t" style="top:944.45px;right:1461px;">Vlr. Pauta:</div>
<div class="a bx" style="left:459.25px;top:939.75px;width:78.25px;height:27px;background:#fff;border:1px solid #9f9f9f;line-height:25.5px;text-align:right;padding:0 2.5px;">0,000000</div>
<div class="a t" style="top:944.45px;right:1275.5px;">%IVA:</div>
<div class="a bx" style="left:645px;top:939.75px;width:78px;height:27px;background:#fff;border:1px solid #9f9f9f;line-height:25.5px;text-align:right;padding:0 2.5px;">30,0000</div>
<div class="a t" style="top:974.45px;right:1461px;">Vlr. Adicional:</div>
<div class="a bx" style="left:459.25px;top:969.75px;width:78.25px;height:27px;background:#fff;border:1px solid #9f9f9f;line-height:25.5px;text-align:right;padding:0 2.5px;">0,0000</div>
<div class="a t" style="top:974.45px;right:1275.5px;">Red.Base IVA:</div>
<div class="a bx" style="left:645px;top:969.75px;width:78px;height:27px;background:#fff;border:1px solid #9f9f9f;line-height:25.5px;text-align:right;padding:0 2.5px;">0,0000</div>
<div class="a t" style="top:1004.45px;right:1461px;">Red.Al.Ext.:</div>
<div class="a bx" style="left:459.25px;top:999.75px;width:78.25px;height:27px;background:#fff;border:1px solid #9f9f9f;line-height:25.5px;text-align:right;padding:0 2.5px;">0,0000</div>
<div class="a t" style="top:1004.45px;right:1275.5px;">Alíq.Interna:</div>
<div class="a bx" style="left:645px;top:999.75px;width:78px;height:27px;background:#fff;border:1px solid #9f9f9f;line-height:25.5px;text-align:right;padding:0 2.5px;">17,0000</div>
<div class="a" style="left:731px;top:248.75px;width:393.5px;height:1px;background:#a8a8a8;"></div>
<svg class="a" style="left:731.25px;top:221.5px" width="111.75" height="28.5"><defs><linearGradient id="g731" x1="0" y1="0" x2="0" y2="1"><stop offset="0" stop-color="#fbfbfb"/><stop offset="1" stop-color="#e6e6e6"/></linearGradient></defs><polygon points="0.5,28.0 27.5,1.5 29.5,0.5 106.75,0.5 109.25,2.5 109.25,28.0" fill="url(#g731)" stroke="#a8a8a8" stroke-width="1"/></svg>
<div class="a t" style="top:229.4px;left:760px;">Inf.Fiscais</div>
<svg class="a" style="left:830px;top:221.5px" width="135.5" height="29.5"><polygon points="0.5,29.5 23,2 134.0,2 134.0,29.5" fill="#f0f0f0"/><path d="M0.5,28.5 L23,2 M134.0,2 L134.0,28.5" stroke="#a8a8a8" fill="none"/><path d="M18.4,5.2 L23,0.3 L132.5,0.3 Q134.5,0.6 134.5,5.2 Z" fill="#1478d4"/></svg>
<div class="a t" style="top:229.4px;left:855.5px;">Ref.Tributária</div>
<div class="a t" style="top:256.4px;left:827.5px;">Base</div>
<div class="a t" style="top:256.4px;left:916.25px;">Alíquota</div>
<div class="a t" style="top:256.4px;left:1023.75px;">Valor</div>
<div class="a t" style="top:284.4px;right:1119.25px;text-decoration:underline;letter-spacing:-0.3px;">CBS:</div>
<div class="a bx" style="left:800.75px;top:279.25px;width:96px;height:27.25px;background:#c1cfde;border:1px solid #9ba2ab;line-height:25.75px;text-align:left;padding:0 2.5px;">167,230000</div>
<div class="a bx" style="left:901.75px;top:279.25px;width:86.25px;height:27.25px;background:#c1cfde;border:1px solid #9ba2ab;line-height:25.75px;text-align:left;padding:0 2.5px;">12,5000</div>
<div class="a bx" style="left:992.5px;top:279.25px;width:108px;height:27.25px;background:#c1cfde;border:1px solid #9ba2ab;line-height:25.75px;text-align:left;padding:0 2.5px;">20,903750</div>
<div class="a t" style="top:317.4px;right:1119.25px;text-decoration:underline;letter-spacing:-0.2px;">IBS:</div>
<div class="a bx" style="left:800.75px;top:312.25px;width:96px;height:27.25px;background:#c1cfde;border:1px solid #9ba2ab;line-height:25.75px;text-align:left;padding:0 2.5px;">167,230000</div>
<div class="a bx" style="left:901.75px;top:312.25px;width:86.25px;height:27.25px;background:#c1cfde;border:1px solid #9ba2ab;line-height:25.75px;text-align:left;padding:0 2.5px;">25,3000</div>
<div class="a bx" style="left:992.5px;top:312.25px;width:108px;height:27.25px;background:#c1cfde;border:1px solid #9ba2ab;line-height:25.75px;text-align:left;padding:0 2.5px;">42,309190</div>
<div class="a t" style="top:349.9px;right:1119.25px;text-decoration:underline;">IS:</div>
<div class="a bx" style="left:800.75px;top:344.75px;width:96px;height:27.25px;background:#c1cfde;border:1px solid #9ba2ab;line-height:25.75px;text-align:left;padding:0 2.5px;">167,230000</div>
<div class="a bx" style="left:901.75px;top:344.75px;width:86.25px;height:27.25px;background:#c1cfde;border:1px solid #9ba2ab;line-height:25.75px;text-align:left;padding:0 2.5px;">19,2300</div>
<div class="a bx" style="left:992.5px;top:344.75px;width:108px;height:27.25px;background:#c1cfde;border:1px solid #9ba2ab;line-height:25.75px;text-align:left;padding:0 2.5px;">32,158329</div>
<div class="a t b" style="top:583.15px;left:730.5px;">Custo fora da nota fiscal</div>
<div class="a" style="left:942px;top:591.75px;width:173.5px;height:1px;background:#a0a0a0;"></div>
<div class="a" style="left:942px;top:592.75px;width:173.5px;height:1px;background:#ffffff;"></div>
<div class="a" style="left:942px;top:591.75px;width:1px;height:3px;background:#a0a0a0;"></div>
<div class="a t" style="top:607.65px;right:1102.25px;letter-spacing:0.0px;">Frete FOB:</div>
<div class="a bx" style="left:819.25px;top:602.25px;width:95.25px;height:27px;background:#fff;border:1px solid #9f9f9f;line-height:25.5px;text-align:right;padding:0 2.5px;">0,000000</div>
<div class="a bx" style="left:918.25px;top:602.25px;width:86px;height:27px;background:#fff;border:1px solid #9f9f9f;line-height:25.5px;text-align:right;padding:0 2.5px;">0,0000</div>
<div class="a bx" style="left:1008px;top:602.25px;width:107.5px;height:27px;background:#fff;border:1px solid #9f9f9f;line-height:25.5px;text-align:right;padding:0 2.5px;">0,000000</div>
<div class="a t" style="top:637.65px;right:1003.5px;">Desp. Financ.:</div>
<div class="a bx" style="left:918.25px;top:632.25px;width:86px;height:27px;background:#fff;border:1px solid #9f9f9f;line-height:25.5px;text-align:right;padding:0 2.5px;">0,0000</div>
<div class="a bx" style="left:1008px;top:632.25px;width:107.5px;height:27px;background:#fff;border:1px solid #9f9f9f;line-height:25.5px;text-align:right;padding:0 2.5px;">0,000000</div>
<div class="a t" style="top:667.65px;right:1003.5px;">Outras Despesas:</div>
<div class="a bx" style="left:918.25px;top:662.25px;width:86px;height:27px;background:#fff;border:1px solid #9f9f9f;line-height:25.5px;text-align:right;padding:0 2.5px;">0,0000</div>
<div class="a bx" style="left:1008px;top:662.25px;width:107.5px;height:27px;background:#fff;border:1px solid #9f9f9f;line-height:25.5px;text-align:right;padding:0 2.5px;">0,000000</div>
<div class="a t" style="top:697.65px;right:1101px;letter-spacing:-0.55px;">FCP Guia:</div>
<div class="a bx" style="left:819.25px;top:692.25px;width:95.25px;height:27px;background:#fff;border:1px solid #9f9f9f;line-height:25.5px;text-align:right;padding:0 2.5px;">0,000000</div>
<div class="a bx" style="left:918.25px;top:692.25px;width:86px;height:27px;background:#fff;border:1px solid #9f9f9f;line-height:25.5px;text-align:right;padding:0 2.5px;">0,0000</div>
<div class="a bx" style="left:1008px;top:692.25px;width:107.5px;height:27px;background:#fff;border:1px solid #9f9f9f;line-height:25.5px;text-align:right;padding:0 2.5px;">0,000000</div>
<div class="a t" style="top:727.65px;right:1101.75px;text-decoration:underline;letter-spacing:-0.55px;">ST Guia:</div>
<div class="a bx" style="left:819.25px;top:722.25px;width:95.25px;height:27px;background:#c1cfde;border:1px solid #9ba2ab;line-height:25.5px;text-align:left;padding:0 1.5px;">0,000000</div>
<div class="a bx" style="left:918.25px;top:722.25px;width:86px;height:27px;background:#c1cfde;border:1px solid #9ba2ab;line-height:25.5px;text-align:left;padding:0 1.5px;">0,0000</div>
<div class="a bx" style="left:1008px;top:722.25px;width:107.5px;height:27px;background:#c1cfde;border:1px solid #9ba2ab;line-height:25.5px;text-align:left;padding:0 1.5px;">0,000000</div>
<div class="a t b" style="top:755.15px;left:730.5px;">Cálculo de ST (ICMS Antecipado)</div>
<div class="a" style="left:1010px;top:763.75px;width:105.5px;height:1px;background:#a0a0a0;"></div>
<div class="a" style="left:1010px;top:764.75px;width:105.5px;height:1px;background:#ffffff;"></div>
<div class="a" style="left:1010px;top:763.75px;width:1px;height:3px;background:#a0a0a0;"></div>
<div class="a t" style="top:776.95px;right:1084.25px;">Vl.Pauta:</div>
<div class="a bx" style="left:835.75px;top:772.25px;width:78.75px;height:26.5px;background:#fff;border:1px solid #9f9f9f;line-height:25.0px;text-align:right;padding:0 2.5px;">0,000000</div>
<div class="a t" style="top:776.95px;right:885px;">%IVA:</div>
<div class="a bx" style="left:1036.25px;top:772.25px;width:79.25px;height:26.5px;background:#fff;border:1px solid #9f9f9f;line-height:25.0px;text-align:right;padding:0 2.5px;">0,0000</div>
<div class="a t" style="top:806.95px;right:1084.25px;">Vl.Adicional:</div>
<div class="a bx" style="left:835.75px;top:802.25px;width:78.75px;height:26.5px;background:#fff;border:1px solid #9f9f9f;line-height:25.0px;text-align:right;padding:0 2.5px;">0,0000</div>
<div class="a t" style="top:806.95px;right:885px;">Red.Base IVA:</div>
<div class="a bx" style="left:1036.25px;top:802.25px;width:79.25px;height:26.5px;background:#fff;border:1px solid #9f9f9f;line-height:25.0px;text-align:right;padding:0 2.5px;">0,0000</div>
<div class="a t" style="top:836.95px;right:1084.25px;">Red.Al.Ext.:</div>
<div class="a bx" style="left:835.75px;top:832.25px;width:78.75px;height:26.5px;background:#fff;border:1px solid #9f9f9f;line-height:25.0px;text-align:right;padding:0 2.5px;">0,0000</div>
<div class="a t" style="top:836.95px;right:885px;">ICMSFrete FOB:</div>
<div class="a bx" style="left:1036.25px;top:832.25px;width:79.25px;height:26.5px;background:#fff;border:1px solid #9f9f9f;line-height:25.0px;text-align:right;padding:0 2.5px;">0,0000</div>
<div class="a t" style="top:866.95px;right:1084.25px;">Alíq.Interna:</div>
<div class="a bx" style="left:835.75px;top:862.25px;width:78.75px;height:26.5px;background:#fff;border:1px solid #9f9f9f;line-height:25.0px;text-align:right;padding:0 2.5px;">0,0000</div>
<div class="a t" style="top:866.95px;right:885px;">Alíq.Ext. Guia:</div>
<div class="a bx" style="left:1036.25px;top:862.25px;width:79.25px;height:26.5px;background:#fff;border:1px solid #9f9f9f;line-height:25.0px;text-align:right;padding:0 2.5px;">0,0000</div>
<div class="a t" style="top:897.65px;right:1101px;">ICMSAntec:</div>
<div class="a bx" style="left:819.25px;top:892.25px;width:95.25px;height:27px;background:#c1cfde;border:1px solid #9ba2ab;line-height:25.5px;text-align:left;padding:0 1.5px;">0,000000</div>
<div class="a bx" style="left:918.25px;top:892.25px;width:86px;height:27px;background:#c1cfde;border:1px solid #9ba2ab;line-height:25.5px;text-align:left;padding:0 1.5px;">0,0000</div>
<div class="a bx" style="left:1008px;top:892.25px;width:107.5px;height:27px;background:#c1cfde;border:1px solid #9ba2ab;line-height:25.5px;text-align:left;padding:0 1.5px;">0,000000</div>
<div class="a t" style="top:927.65px;right:1101px;">Dif.Alíq.:</div>
<div class="a bx" style="left:819.25px;top:922.25px;width:95.25px;height:27px;background:#c1cfde;border:1px solid #9ba2ab;line-height:25.5px;text-align:left;padding:0 1.5px;">0,000000</div>
<div class="a bx" style="left:918.25px;top:922.25px;width:86px;height:27px;background:#fff;border:1px solid #9f9f9f;line-height:25.5px;text-align:right;padding:0 2.5px;">0,0000</div>
<div class="a bx" style="left:1008px;top:922.25px;width:107.5px;height:27px;background:#fff;border:1px solid #9f9f9f;line-height:25.5px;text-align:right;padding:0 2.5px;">0,000000</div>
<div class="a t b" style="top:952.45px;left:730.5px;">Acréscimo Custo</div>
<div class="a" style="left:878px;top:960.75px;width:237.5px;height:1px;background:#a0a0a0;"></div>
<div class="a" style="left:878px;top:961.75px;width:237.5px;height:1px;background:#ffffff;"></div>
<div class="a" style="left:878px;top:960.75px;width:1px;height:3px;background:#a0a0a0;"></div>
<div class="a t" style="top:976.65px;right:1100.5px;">% Acrés.:</div>
<div class="a bx" style="left:819.25px;top:971.25px;width:95.25px;height:27.5px;background:#fff;border:1px solid #9f9f9f;line-height:26.0px;text-align:right;padding:0 2.5px;">0,0000</div>
<div class="a t" style="top:976.65px;right:912.5px;">Vlr. Acrés.:</div>
<div class="a bx" style="left:1008px;top:971.25px;width:107.5px;height:27.5px;background:#fff;border:1px solid #9f9f9f;line-height:26.0px;text-align:right;padding:0 2.5px;">0,0000</div>
<div class="a t b" style="top:999.65px;left:730.5px;">Bonificação</div>
<div class="a" style="left:835px;top:1008.75px;width:106px;height:1px;background:#a0a0a0;"></div>
<div class="a" style="left:835px;top:1009.75px;width:106px;height:1px;background:#ffffff;"></div>
<div class="a" style="left:835px;top:1008.75px;width:1px;height:3px;background:#a0a0a0;"></div>
<div class="a t b" style="top:221.9px;left:1125px;">Descontos financeiro</div>
<div class="a" style="left:1314.5px;top:225.75px;width:197.0px;height:1px;background:#a0a0a0;"></div>
<div class="a" style="left:1314.5px;top:226.75px;width:197.0px;height:1px;background:#ffffff;"></div>
<div class="a" style="left:1314.5px;top:225.75px;width:1px;height:3px;background:#a0a0a0;"></div>
<div class="a t" style="top:248.9px;right:608px;">Conta pagar:</div>
<div class="a bx" style="left:1312.5px;top:243.0px;width:86.25px;height:27.25px;background:#fff;border:1px solid #9f9f9f;line-height:25.75px;text-align:right;padding:0 2.5px;">0,0000</div>
<div class="a bx" style="left:1402.5px;top:243.0px;width:107.5px;height:27.25px;background:#fff;border:1px solid #9f9f9f;line-height:25.75px;text-align:right;padding:0 2.5px;">0,000000</div>
<div class="a t" style="top:278.9px;right:608px;">Produtor rural:</div>
<div class="a bx" style="left:1312.5px;top:273.5px;width:86.25px;height:27px;background:#fff;border:1px solid #9f9f9f;line-height:25.5px;text-align:right;padding:0 2.5px;">0,0000</div>
<div class="a t b" style="top:302.65px;left:1125px;">Embalagem</div>
<div class="a" style="left:1231.75px;top:310.75px;width:281.25px;height:1px;background:#a0a0a0;"></div>
<div class="a" style="left:1231.75px;top:311.75px;width:281.25px;height:1px;background:#ffffff;"></div>
<div class="a" style="left:1231.75px;top:310.75px;width:1px;height:3px;background:#a0a0a0;"></div>
<div class="a t" style="top:320.9px;right:508.75px;">Qt.Unit.CX:</div>
<div class="a bx" style="left:1411.25px;top:315.5px;width:101.5px;height:26.75px;background:#c1cfde;border:1px solid #9ba2ab;line-height:25.25px;text-align:left;padding:0 1.5px;">1,000000</div>
<div class="a t" style="top:350.9px;right:508.75px;">Peso Líq.:</div>
<div class="a bx" style="left:1411.25px;top:345.5px;width:101.5px;height:26.75px;background:#c1cfde;border:1px solid #9ba2ab;line-height:25.25px;text-align:left;padding:0 1.5px;">0,000000</div>
<div class="a t" style="top:380.9px;right:508.75px;">Peso bruto:</div>
<div class="a bx" style="left:1411.25px;top:375.5px;width:101.5px;height:26.75px;background:#c1cfde;border:1px solid #9ba2ab;line-height:25.25px;text-align:left;padding:0 1.5px;">0,000000</div>
<div class="a t b" style="top:406.4px;left:1125px;">Quantidades</div>
<div class="a" style="left:1240.5px;top:414.75px;width:272.5px;height:1px;background:#a0a0a0;"></div>
<div class="a" style="left:1240.5px;top:415.75px;width:272.5px;height:1px;background:#ffffff;"></div>
<div class="a" style="left:1240.5px;top:414.75px;width:1px;height:3px;background:#a0a0a0;"></div>
<div class="a t" style="top:425.15px;right:508.5px;">Qtde: (CX)</div>
<div class="a bx" style="left:1411.25px;top:419.0px;width:101.75px;height:27px;background:#fff;border:1px solid #9f9f9f;line-height:25.5px;text-align:right;padding:0 2.5px;">0,000000</div>
<div class="a t" style="top:484.65px;right:511.25px;">Qtde. Unid. Venda:</div>
<div class="a bx" style="left:1411.25px;top:478.5px;width:101.75px;height:28px;background:#c1cfde;border:1px solid #9ba2ab;line-height:26.5px;text-align:right;padding:0 2.5px;">0,000000</div>
<div class="a t" style="top:544.85px;right:574.25px;">Preço merc. x Qtd.pedida:</div>
<div class="a bx" style="left:1348.75px;top:539.0px;width:164.25px;height:27px;background:#c1cfde;border:1px solid #9ba2ab;line-height:25.5px;text-align:left;padding:0 1.5px;">0,000000</div>
<div class="a t" style="top:571.55px;right:574.25px;">Preço liq. x Qtd.pedida:</div>
<div class="a bx" style="left:1348.75px;top:569.0px;width:164.25px;height:27px;background:#c1cfde;border:1px solid #9ba2ab;line-height:25.5px;text-align:left;padding:0 1.5px;">0,000000</div>
<div class="a t" style="top:601.15px;right:574.25px;">Preço compra x Qtd.pedida:</div>
<div class="a bx" style="left:1348.75px;top:599.0px;width:164.25px;height:27px;background:#c1cfde;border:1px solid #9ba2ab;line-height:25.5px;text-align:left;padding:0 1.5px;">0,000000</div>
<div class="a t b" style="top:627.65px;left:1125px;">BCR</div>
<div class="a" style="left:1163px;top:636.75px;width:350px;height:1px;background:#a0a0a0;"></div>
<div class="a" style="left:1163px;top:637.75px;width:350px;height:1px;background:#ffffff;"></div>
<div class="a" style="left:1163px;top:636.75px;width:1px;height:3px;background:#a0a0a0;"></div>
<div class="a bx" style="left:1405px;top:641.0px;width:108px;height:27.5px;background:#cccccc;border:1px solid #c4c4c4;line-height:27.0px;text-align:center;color:#858585;">Calcular</div>
<div class="a t" style="top:676.4px;right:701.75px;letter-spacing:-0.6px;">ICMS:</div>
<div class="a bx" style="left:1218px;top:671.0px;width:97px;height:27.25px;background:#c1cfde;border:1px solid #9ba2ab;line-height:25.75px;text-align:left;padding:0 1.5px;">0,000000</div>
<div class="a bx" style="left:1417.5px;top:671.0px;width:96.75px;height:27.25px;background:#c1cfde;border:1px solid #9ba2ab;line-height:25.75px;text-align:left;padding:0 1.5px;">0,000000</div>
<div class="a t" style="top:706.4px;right:701.75px;letter-spacing:-0.6px;">ST BCR:</div>
<div class="a bx" style="left:1218px;top:701.0px;width:97px;height:27.25px;background:#c1cfde;border:1px solid #9ba2ab;line-height:25.75px;text-align:left;padding:0 1.5px;">0,000000</div>
<div class="a bx" style="left:1417.5px;top:701.0px;width:96.75px;height:27.25px;background:#c1cfde;border:1px solid #9ba2ab;line-height:25.75px;text-align:left;padding:0 1.5px;">0,000000</div>
<div class="a t" style="top:736.4px;right:701.75px;letter-spacing:-0.6px;">FCP ST BCR:</div>
<div class="a bx" style="left:1218px;top:731.0px;width:97px;height:27.25px;background:#fff;border:1px solid #9f9f9f;line-height:25.75px;text-align:right;padding:0 2.5px;">0,000000</div>
<div class="a bx" style="left:1317.5px;top:731.0px;width:96.25px;height:27.25px;background:#fff;border:1px solid #9f9f9f;line-height:25.75px;text-align:right;padding:0 2.5px;">5,0000</div>
<div class="a bx" style="left:1417.5px;top:731.0px;width:96.75px;height:27.25px;background:#fff;border:1px solid #9f9f9f;line-height:25.75px;text-align:right;padding:0 2.5px;">0,000000</div>
<div class="a t b" style="top:761.9px;left:1125px;">Dados fiscais</div>
<div class="a" style="left:1240.5px;top:769.75px;width:272.5px;height:1px;background:#a0a0a0;"></div>
<div class="a" style="left:1240.5px;top:770.75px;width:272.5px;height:1px;background:#ffffff;"></div>
<div class="a" style="left:1240.5px;top:769.75px;width:1px;height:3px;background:#a0a0a0;"></div>
<div class="a t" style="top:785.9px;right:698.75px;letter-spacing:-0.3px;">CFOP:</div>
<div class="a bx" style="left:1224.25px;top:780.5px;width:71.25px;height:27.25px;background:#fff;border:1px solid #9f9f9f;line-height:25.75px;text-align:left;padding:0 1.5px;">2102</div>
<div class="a bx" style="left:1299.25px;top:780.5px;width:33.75px;height:27.25px;background:#e1e1e1;border:1px solid #adadad;line-height:26.75px;text-align:center;">...</div>
<div class="a t" style="top:785.9px;left:1340px;">Sit.Trib.:</div>
<div class="a bx" style="left:1405.5px;top:780.5px;width:69.5px;height:27.25px;background:#fff;border:1px solid #9f9f9f;line-height:25.75px;text-align:left;padding:0 1.5px;">10</div>
<div class="a bx" style="left:1478.75px;top:780.5px;width:33.75px;height:27.25px;background:#e1e1e1;border:1px solid #adadad;line-height:26.75px;text-align:center;">...</div>
<div class="a t" style="top:816.15px;right:698.75px;">Orig.Merc.:</div>
<div class="a bx" style="left:1224.25px;top:811.0px;width:71.25px;height:26.75px;background:#fff;border:1px solid #c4c4c4;line-height:25.25px;text-align:left;padding:0 1.5px;color:#8a8a8a;overflow:hidden;">Orig.Merc</div>
<div class="a bx" style="left:1299.25px;top:811.0px;width:33.75px;height:26.75px;background:#e1e1e1;border:1px solid #adadad;line-height:26.25px;text-align:center;">...</div>
<div class="a t" style="top:847.15px;left:1125px;letter-spacing:-0.3px;">CST.PIS/COFINS:</div>
<div class="a bx" style="left:1254.25px;top:842.25px;width:255.25px;height:26.75px;background:#fff;border:1px solid #b5b5b5;line-height:25.25px;text-align:left;padding:0 3px;overflow:hidden;">50 - Operação com Direito a Cr</div>
<div class="a" style="left:1484.5px;top:845.25px;width:22px;height:20.75px;background:#9fbcf0;"></div>
<svg class="a" style="left:1484.5px;top:845.5px" width="22" height="20.75"><polygon points="6.0,8.375 16.0,8.375 11.0,13.875" fill="#000"/></svg>
<div class="a t b" style="top:874.15px;left:1125px;">Custo última entrada previsto</div>
<div class="a" style="left:1387px;top:882.75px;width:123px;height:1px;background:#a0a0a0;"></div>
<div class="a" style="left:1387px;top:883.75px;width:123px;height:1px;background:#ffffff;"></div>
<div class="a" style="left:1387px;top:882.75px;width:1px;height:3px;background:#a0a0a0;"></div>
<div class="a t" style="top:899.15px;right:696.5px;text-decoration:underline;">Valor:</div>
<div class="a bx" style="left:1222.75px;top:895.0px;width:101.25px;height:26.75px;background:#c1cfde;border:1px solid #9ba2ab;line-height:25.25px;text-align:left;padding:0 1.5px;">276,364298</div>
<div class="a t" style="top:899.15px;right:514.7px;text-decoration:underline;">Custo:</div>
<div class="a bx" style="left:1411.5px;top:895.0px;width:101.75px;height:26.75px;background:#c1cfde;border:1px solid #9ba2ab;line-height:25.25px;text-align:left;padding:0 1.5px;">276,364298</div>
</body></html>
